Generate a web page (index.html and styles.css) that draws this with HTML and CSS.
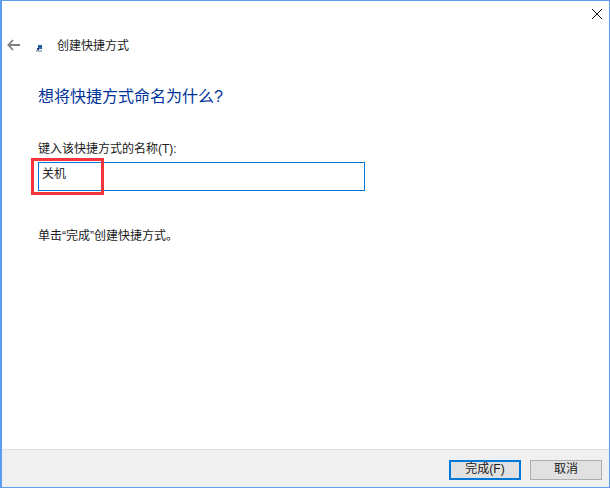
FILE: index.html
```html
<!DOCTYPE html>
<html lang="zh-CN">
<head>
<meta charset="utf-8">
<title>创建快捷方式</title>
<link rel="stylesheet" href="styles.css">
</head>
<body>
<div class="window">
  <div class="titlebar">
    <svg class="close" width="10" height="10" viewBox="0 0 10 10"><path d="M0 0L10 10M10 0L0 10" stroke="#111" stroke-width="1" fill="none"/></svg>
  </div>
  <div class="nav">
    <svg class="back" width="13" height="12" viewBox="0 0 13 12"><path d="M6 1L1.3 6L6 11M1.3 6H13" stroke="#808080" stroke-width="1.8" fill="none"/></svg>
    <svg class="wizard-icon" width="6" height="7" viewBox="0 0 6 7"><rect x="0" y="5" width="6" height="2" fill="#a9b4c4"/><rect x="2" y="0" width="4" height="4" fill="#2a5ea8"/><rect x="1" y="3" width="2" height="2" fill="#1e3f7a"/></svg>
    <span class="nav-title">创建快捷方式</span>
  </div>
  <main class="content">
    <h1 class="heading">想将快捷方式命名为什么?</h1>
    <label class="label" for="name">键入该快捷方式的名称(T):</label>
    <div class="field-wrap">
      <input class="field" id="name" value="关机">
      <div class="highlight"></div>
    </div>
    <p class="hint">单击“完成”创建快捷方式。</p>
  </main>
  <footer class="footer">
    <button class="btn btn-primary">完成(F)</button>
    <button class="btn">取消</button>
  </footer>
</div>
</body>
</html>
```
FILE: styles.css
```css
* { box-sizing: border-box; }
html, body { margin: 0; padding: 0; }
body {
  width: 610px;
  height: 488px;
  font-family: "Liberation Sans", "Noto Sans CJK SC", sans-serif;
  font-size: 12px;
  color: #1a1a1a;
  background: #fff;
  overflow: hidden;
}
.window {
  width: 610px;
  height: 488px;
  border: 1px solid #5b9df0;
  border-left-width: 2px;
  display: flex;
  flex-direction: column;
  background: #fff;
}
.titlebar {
  height: 29px;
  display: flex;
  justify-content: flex-end;
  padding: 8px 7px 0 0;
  flex: none;
}
.close { display: block; }
.nav {
  height: 30px;
  flex: none;
  display: flex;
  align-items: center;
  padding-left: 5px;
}
.back { display: block; }
.wizard-icon { display: block; margin: 6px 0 0 16px; }
.nav-title { margin: 2px 0 0 15px; line-height: 30px; }
.content {
  flex: 1;
  padding: 0 0 0 36px;
}
.heading {
  margin: 25px 0 0;
  font-size: 16px;
  font-weight: 400;
  line-height: 24px;
  color: #003399;
}
.label {
  display: block;
  margin-top: 31px;
  line-height: 18px;
}
.field-wrap {
  position: relative;
  width: 327px;
  height: 29px;
  margin-top: 4px;
}
.field {
  display: block;
  width: 100%;
  height: 100%;
  border: 1px solid #0078d7;
  padding: 0 3px 8px;
  font: inherit;
  color: #1a1a1a;
  background: #fff;
  outline: none;
  border-radius: 0;
}
.highlight {
  position: absolute;
  left: -7px;
  top: -4px;
  width: 73px;
  height: 37px;
  border: 3px solid #f4353d;
}
.hint {
  margin: 36px 0 0;
  line-height: 18px;
}
.footer {
  height: 38px;
  flex: none;
  border-top: 1px solid #dfdfdf;
  background: #f0f0f0;
  display: flex;
  justify-content: flex-end;
  gap: 9px;
  padding: 10px 7px 0 0;
}
.btn {
  width: 72px;
  height: 20px;
  border: 1px solid #adadad;
  background: #e1e1e1;
  font: inherit;
  line-height: 14px;
  color: #1a1a1a;
  padding: 0 0 2px;
}
.btn-primary {
  border: 2px solid #0078d7;
}
```
